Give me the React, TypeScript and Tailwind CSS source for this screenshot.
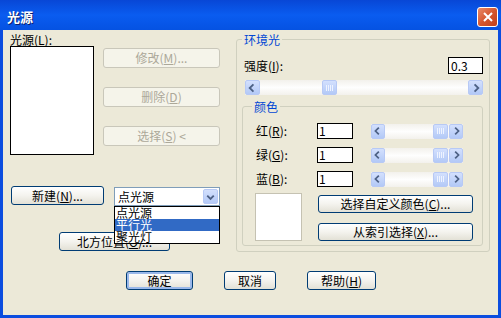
import type { ReactNode } from "react";

const font = { fontFamily: '"Noto Sans CJK SC", "Liberation Sans", sans-serif' };

function Btn({ children, className = "", disabled = false, primary = false }: { children: ReactNode; className?: string; disabled?: boolean; primary?: boolean }) {
  const tone = disabled
    ? "border-[#c9c7ba] bg-[#f5f4ea] text-[#aca899]"
    : "border-[#003c74] bg-gradient-to-b from-white via-[#f4f3ee] to-[#e3e1d6] text-black";
  const ring = primary ? "shadow-[inset_0_0_0_2px_#9ab8ea]" : "";
  return (
    <div className={`flex items-center justify-center rounded-[3px] border text-[12px] leading-[12px] ${tone} ${ring} ${className}`}>
      {children}
    </div>
  );
}

function Arrow({ dir, small = false }: { dir: "left" | "right" | "down"; small?: boolean }) {
  const d = dir === "left" ? "M8 3 L4 7 L8 11" : dir === "right" ? "M6 3 L10 7 L6 11" : "M3.5 5.5 L7 9 L10.5 5.5";
  return (
    <div className={`flex h-full ${small ? "w-[14px]" : "w-[15px]"} shrink-0 items-center justify-center rounded-[2px] border border-[#b7c9f5] bg-gradient-to-b from-[#d3e0fd] to-[#b3c9f7]`}>
      <svg width="14" height="14" viewBox="0 0 14 14">
        <path d={d} fill="none" stroke="#4d6185" strokeWidth="2" />
      </svg>
    </div>
  );
}

function Thumb() {
  return (
    <div className="flex h-full w-[15px] shrink-0 items-center justify-center gap-[1px] rounded-[2px] border border-[#b7c9f5] bg-gradient-to-b from-[#d3e0fd] to-[#b3c9f7]">
      <div className="h-[6px] w-[1px] bg-[#eef3ff]" />
      <div className="h-[6px] w-[1px] bg-[#eef3ff]" />
      <div className="h-[6px] w-[1px] bg-[#eef3ff]" />
      <div className="h-[6px] w-[1px] bg-[#eef3ff]" />
    </div>
  );
}

function ScrollBar({ className = "", thumbAt, small = false }: { className?: string; thumbAt: string; small?: boolean }) {
  return (
    <div className={`flex h-[15px] bg-gradient-to-b from-[#f3f1ec] via-[#fefefe] to-[#f3f1ec] ${className}`}>
      <Arrow dir="left" small={small} />
      <div className={`flex flex-1 ${thumbAt}`}>
        <Thumb />
      </div>
      <Arrow dir="right" small={small} />
    </div>
  );
}

function ColorRow({ label, k }: { label: string; k: string }) {
  return (
    <div className="flex h-[16px] items-center pl-[13px]">
      <div className="w-[61px] text-[12px] leading-[12px]">
        {label}(<u>{k}</u>):
      </div>
      <div className="flex h-[16px] w-[36px] items-center border border-black bg-white pl-[1px] text-[12px] leading-[12px]">1</div>
      <ScrollBar small className="ml-[18px] w-[92px]" thumbAt="pl-[48px]" />
    </div>
  );
}

export default function App() {
  return (
    <div className="flex h-[318px] w-[501px] flex-col overflow-hidden bg-[#0b4ddf]" style={font}>
      {/* Title bar */}
      <div className="flex h-[30px] shrink-0 items-center justify-between bg-gradient-to-b from-[#0847d6] via-[#0a5cf0] to-[#0552e2] pl-[7px] pr-[3px] pt-[4px]">
        <span className="text-[13px] font-bold leading-[16px] text-white [text-shadow:1px_1px_0_#0a1f6e]">光源</span>
        <div className="flex h-[20px] w-[21px] items-center justify-center rounded-[3px] border border-white bg-gradient-to-br from-[#e88a68] via-[#d6572f] to-[#c0401a]">
          <svg width="12" height="12" viewBox="0 0 12 12">
            <path d="M2 2 L10 10 M10 2 L2 10" stroke="white" strokeWidth="2" />
          </svg>
        </div>
      </div>

      {/* Client */}
      <div className="mx-[3px] mb-[3px] flex flex-1 flex-col bg-[#ece9d8] text-black">
        <div className="flex h-[222px]">
          {/* Left column */}
          <div className="ml-[7px] flex w-[210px] flex-col pt-[3px]">
            <div className="h-[13px] text-[12px] leading-[13px]">
              光源(<u>L</u>):
            </div>
            <div className="flex">
              <div className="h-[109px] w-[84px] border border-black bg-white" />
              <div className="ml-[9px] flex w-[117px] flex-col gap-[19px] pt-[2px]">
                <Btn disabled className="h-[20px]">修改(<u>M</u>)...</Btn>
                <Btn disabled className="h-[20px]">删除(<u>D</u>)</Btn>
                <Btn disabled className="h-[20px]">选择(<u>S</u>) &lt;</Btn>
              </div>
            </div>
            <div className="mt-[31px] flex h-[20px] items-start">
              <Btn className="ml-[1px] h-[19px] w-[93px]">新建(<u>N</u>)...</Btn>
              <div className="relative z-10 ml-[10px] mt-[1px] h-[19px] w-[106px]">
                <div className="flex h-full items-center border border-[#7f9db9] bg-white pl-[3px] pr-[1px] py-[1px] text-[12px] leading-[12px]">
                  <span className="flex-1">点光源</span>
                  <Arrow dir="down" />
                </div>
                <div className="absolute left-0 top-full w-full border border-black bg-white text-[12px] leading-[12px]">
                  <div className="h-[12px] pl-[1px]">点光源</div>
                  <div className="h-[12px] bg-[#316ac5] pl-[1px] text-white">平行光</div>
                  <div className="h-[12px] pl-[1px]">聚光灯</div>
                </div>
              </div>
            </div>
            <Btn className="ml-[49px] mt-[26px] h-[19px] w-[111px]">北方位置(<u>O</u>)...</Btn>
          </div>

          {/* 环境光 group */}
          <fieldset className="ml-[16px] mt-[3px] flex h-[219px] w-[254px] flex-col rounded-[3px] border border-[#d0d0bf]">
            <legend className="ml-[5px] px-[2px] text-[12px] leading-[13px] text-[#0046d5]">环境光</legend>
            <div className="mt-[11px] flex h-[17px] items-center justify-between pl-[7px] pr-[6px]">
              <span className="text-[12px] leading-[12px]">
                强度(<u>I</u>):
              </span>
              <div className="flex h-[17px] w-[35px] items-center border border-black bg-white pl-[2px] text-[12px] leading-[12px]">0.3</div>
            </div>
            <ScrollBar className="ml-[8px] mt-[6px] w-[238px]" thumbAt="pl-[62px]" />

            {/* 颜色 group */}
            <fieldset className="ml-[5px] mt-[5px] h-[146px] w-[241px] rounded-[3px] border border-[#d0d0bf]">
              <legend className="ml-[9px] px-[2px] text-[12px] leading-[13px] text-[#0046d5]">颜色</legend>
              <div className="mt-[10px] flex flex-col gap-[8px]">
                <ColorRow label="红" k="R" />
                <ColorRow label="绿" k="G" />
                <ColorRow label="蓝" k="B" />
              </div>
              <div className="mt-[6px] flex">
                <div className="ml-[12px] h-[48px] w-[47px] border border-[#c5c2b2] bg-white" />
                <div className="ml-[16px] flex w-[155px] flex-col gap-[10px] pt-[2px]">
                  <Btn className="h-[18px]">选择自定义颜色(<u>C</u>)...</Btn>
                  <Btn className="h-[18px]">从索引选择(<u>X</u>)...</Btn>
                </div>
              </div>
            </fieldset>
          </fieldset>
        </div>

        {/* Bottom buttons */}
        <div className="mt-[19px] flex">
          <Btn primary className="ml-[123px] h-[19px] w-[67px]">确定</Btn>
          <Btn className="ml-[31px] h-[19px] w-[52px]">取消</Btn>
          <Btn className="ml-[31px] h-[19px] w-[69px]">帮助(<u>H</u>)</Btn>
        </div>
      </div>
    </div>
  );
}
